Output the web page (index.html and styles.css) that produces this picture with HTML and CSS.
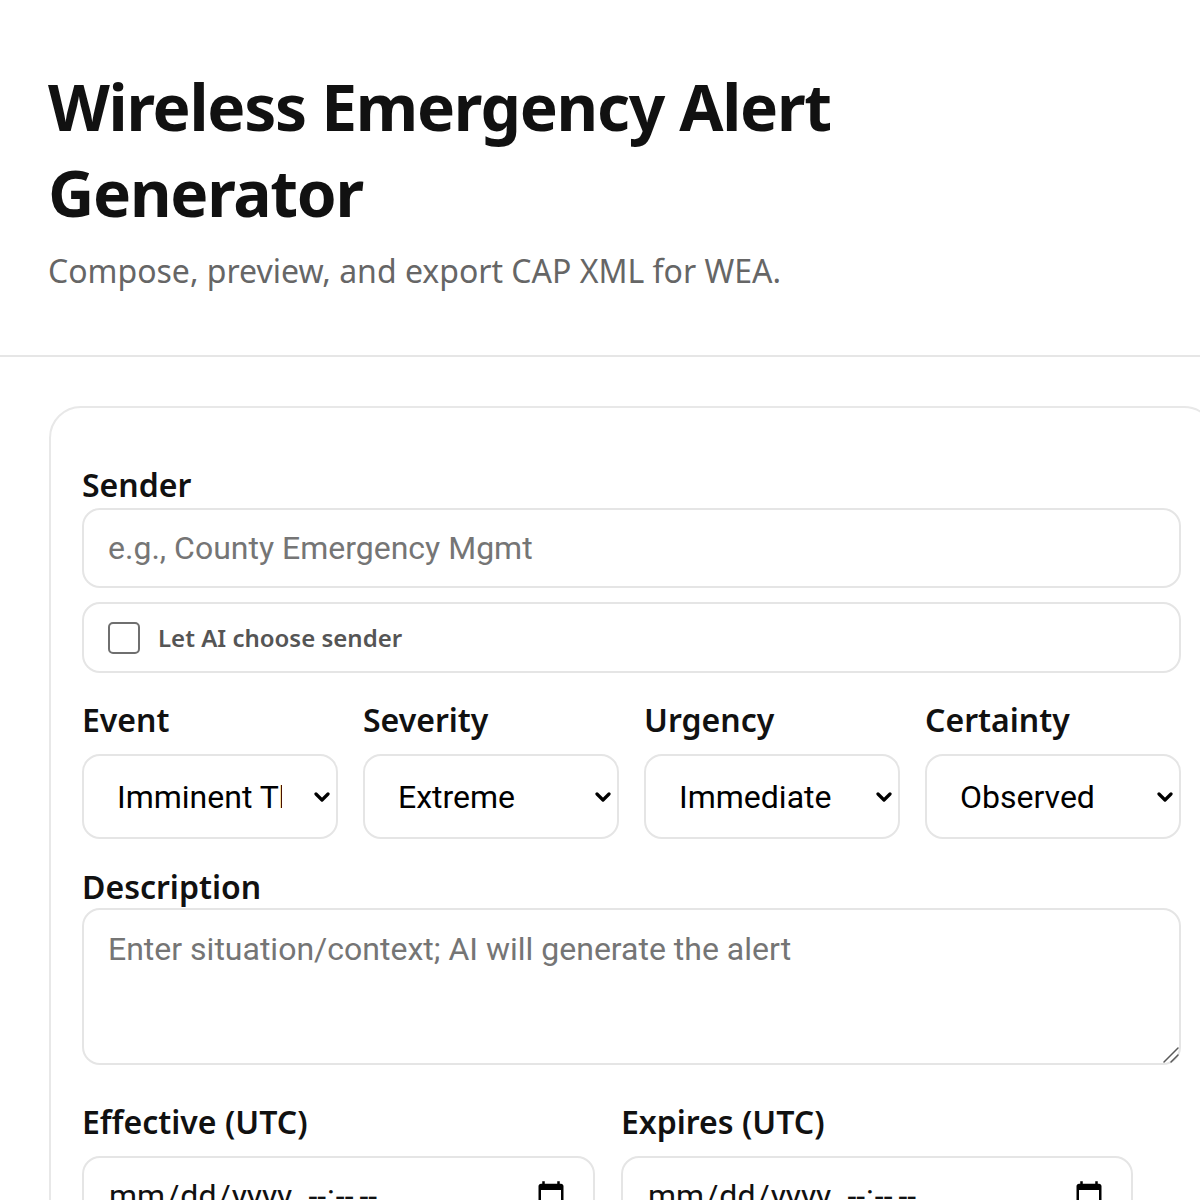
FILE: index.html
```html
<!DOCTYPE html>
<html lang="en">
<head>
<meta charset="utf-8">
<title>Wireless Emergency Alert Generator</title>
<link rel="stylesheet" href="styles.css">
</head>
<body>
<header class="hero">
  <h1 class="title">Wireless Emergency Alert Generator</h1>
  <p class="subtitle">Compose, preview, and export CAP XML for WEA.</p>
</header>
<main class="main">
  <section class="card">
    <div class="field">
      <label class="label label-tight" for="sender">Sender</label>
      <input id="sender" class="input" type="text" placeholder="e.g., County Emergency Mgmt">
    </div>
    <label class="check-row">
      <input type="checkbox" class="check">
      <span>Let AI choose sender</span>
    </label>

    <div class="grid4">
      <div class="field">
        <label class="label label-gap" for="event">Event</label>
        <div class="select-wrap">
          <select id="event" class="select"><option>Imminent Threat</option></select>
          <svg class="chev" viewBox="0 0 16 10" width="16" height="10"><path d="M2 2 L8 8 L14 2" fill="none" stroke="#000" stroke-width="3.2" stroke-linecap="round" stroke-linejoin="round"/></svg>
        </div>
      </div>
      <div class="field">
        <label class="label label-gap" for="severity">Severity</label>
        <div class="select-wrap">
          <select id="severity" class="select"><option>Extreme</option></select>
          <svg class="chev" viewBox="0 0 16 10" width="16" height="10"><path d="M2 2 L8 8 L14 2" fill="none" stroke="#000" stroke-width="3.2" stroke-linecap="round" stroke-linejoin="round"/></svg>
        </div>
      </div>
      <div class="field">
        <label class="label label-gap" for="urgency">Urgency</label>
        <div class="select-wrap">
          <select id="urgency" class="select"><option>Immediate</option></select>
          <svg class="chev" viewBox="0 0 16 10" width="16" height="10"><path d="M2 2 L8 8 L14 2" fill="none" stroke="#000" stroke-width="3.2" stroke-linecap="round" stroke-linejoin="round"/></svg>
        </div>
      </div>
      <div class="field">
        <label class="label label-gap" for="certainty">Certainty</label>
        <div class="select-wrap">
          <select id="certainty" class="select"><option>Observed</option></select>
          <svg class="chev" viewBox="0 0 16 10" width="16" height="10"><path d="M2 2 L8 8 L14 2" fill="none" stroke="#000" stroke-width="3.2" stroke-linecap="round" stroke-linejoin="round"/></svg>
        </div>
      </div>
    </div>

    <div class="field desc">
      <label class="label label-desc" for="desc">Description</label>
      <div class="textarea-wrap">
        <textarea id="desc" class="textarea" placeholder="Enter situation/context; AI will generate the alert"></textarea>
        <svg class="grip" viewBox="0 0 18 18" width="18" height="18"><path d="M2 16 L16 2 M9 16 L16 9" fill="none" stroke="#5a5a5a" stroke-width="1.5" stroke-linecap="round"/></svg>
      </div>
    </div>

    <div class="grid2">
      <div class="field">
        <label class="label label-gap" for="eff">Effective (UTC)</label>
        <input id="eff" class="input date" type="datetime-local">
      </div>
      <div class="field">
        <label class="label label-gap" for="exp">Expires (UTC)</label>
        <input id="exp" class="input date" type="datetime-local">
      </div>
    </div>
  </section>
</main>
</body>
</html>
```
FILE: styles.css
```css
* { box-sizing: border-box; }

body {
  margin: 0;
  overflow-x: hidden;
  background: #fff;
  color: #111;
  font-family: "Noto Sans", "Open Sans", sans-serif;
}

.hero {
  padding: 64px 48px 62px;
  border-bottom: 2px solid #e6e6e6;
}

.title {
  margin: 0;
  max-width: 900px;
  font-size: 64px;
  line-height: 86px;
  font-weight: 700;
  letter-spacing: -0.02em;
  color: #111;
}

.subtitle {
  margin: 12px 0 0;
  font-size: 32px;
  line-height: 45px;
  color: #666;
}

.main {
  padding: 49px 0 0 49px;
}

.card {
  width: 1167px;
  border: 2px solid #e8e8e8;
  border-radius: 32px;
  padding: 57px 33px 60px 31px;
}

.label {
  display: block;
  font-size: 32px;
  line-height: 40px;
  font-weight: 600;
  color: #111;
}
.label-tight { margin-bottom: 3px; }
.label-gap { margin-bottom: 14px; }
.label-desc { margin-bottom: 1px; }

.input,
.textarea,
.select {
  width: 100%;
  border: 2px solid #e5e5e5;
  border-radius: 18px;
  background: #fff;
  color: #111;
  font-family: Roboto, "Liberation Sans", sans-serif;
  font-size: 32px;
  outline: none;
}

.input {
  height: 80px;
  padding: 0 24px;
}

.input::placeholder,
.textarea::placeholder {
  color: #757575;
}

.check-row {
  margin-top: 14px;
  height: 71px;
  display: flex;
  align-items: center;
  gap: 18px;
  padding-left: 24px;
  border: 2px solid #e5e5e5;
  border-radius: 18px;
  font-size: 24px;
  font-weight: 600;
  color: #555;
}

.check {
  appearance: none;
  -webkit-appearance: none;
  margin: 0;
  width: 32px;
  height: 32px;
  border: 2px solid #6f6f6f;
  border-radius: 5px;
  background: #fff;
  flex: none;
}

.grid4 {
  margin-top: 27px;
  display: grid;
  grid-template-columns: repeat(4, 1fr);
  column-gap: 25px;
}

.select-wrap {
  position: relative;
}

.select {
  appearance: none;
  -webkit-appearance: none;
  height: 85px;
  padding: 0 54px 0 33px;
  color: #000;
}

.chev {
  position: absolute;
  right: 8px;
  top: 50%;
  transform: translateY(-50%);
  pointer-events: none;
}

.desc {
  margin-top: 28px;
}

.textarea-wrap {
  position: relative;
}

.textarea {
  display: block;
  height: 157px;
  padding: 20px 24px;
  resize: none;
  line-height: normal;
}

.grip {
  position: absolute;
  right: 1px;
  bottom: 1px;
  pointer-events: none;
}

.grid2 {
  margin-top: 37px;
  display: grid;
  grid-template-columns: 513px 512px;
  column-gap: 26px;
}

.date {
  color: #111;
}
```
